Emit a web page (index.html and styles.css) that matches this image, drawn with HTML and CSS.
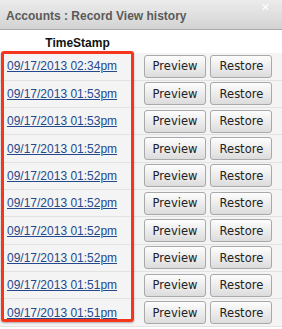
FILE: index.html
```html
<html>
<head>
<link rel="stylesheet" href="styles.css">
</head>
<body>
<div class="dialog">
  <div class="titlebar">
    <span class="title">Accounts : Record View history</span>
    <span class="close">&#x2715;</span>
  </div>
  <table class="history">
    <tr>
      <th class="stamp">TimeStamp</th>
      <th></th>
      <th></th>
    </tr>
    <tr><td class="stamp"><a href="#">09/17/2013 02:34pm</a></td><td><button>Preview</button></td><td><button>Restore</button></td></tr>
    <tr><td class="stamp"><a href="#">09/17/2013 01:53pm</a></td><td><button>Preview</button></td><td><button>Restore</button></td></tr>
    <tr><td class="stamp"><a href="#">09/17/2013 01:53pm</a></td><td><button>Preview</button></td><td><button>Restore</button></td></tr>
    <tr><td class="stamp"><a href="#">09/17/2013 01:52pm</a></td><td><button>Preview</button></td><td><button>Restore</button></td></tr>
    <tr><td class="stamp"><a href="#">09/17/2013 01:52pm</a></td><td><button>Preview</button></td><td><button>Restore</button></td></tr>
    <tr><td class="stamp"><a href="#">09/17/2013 01:52pm</a></td><td><button>Preview</button></td><td><button>Restore</button></td></tr>
    <tr><td class="stamp"><a href="#">09/17/2013 01:52pm</a></td><td><button>Preview</button></td><td><button>Restore</button></td></tr>
    <tr><td class="stamp"><a href="#">09/17/2013 01:52pm</a></td><td><button>Preview</button></td><td><button>Restore</button></td></tr>
    <tr><td class="stamp"><a href="#">09/17/2013 01:51pm</a></td><td><button>Preview</button></td><td><button>Restore</button></td></tr>
    <tr><td class="stamp"><a href="#">09/17/2013 01:51pm</a></td><td><button>Preview</button></td><td><button>Restore</button></td></tr>
  </table>
  <div class="highlight"></div>
</div>
</body>
</html>
```
FILE: styles.css
```css
body {
    margin: 0;
    background: #ffffff;
    font-family: "Liberation Sans", Arial, sans-serif;
}
.dialog {
    position: relative;
    width: 282px;
    height: 329px;
    overflow: hidden;
}
.titlebar {
    display: flex;
    justify-content: space-between;
    align-items: flex-start;
    height: 29px;
    border-bottom: 1px solid #a9a9a9;
    background: linear-gradient(#ececec, #d3d3d3);
    padding: 0 0 0 6px;
}
.title {
    margin-top: 9px;
    font-size: 12px;
    font-weight: bold;
    color: #5a5a5a;
}
.close {
    margin: 1px 12px 0 0;
    font-family: "DejaVu Sans", sans-serif;
    font-size: 11px;
    font-weight: bold;
    color: #ffffff;
}
.history {
    width: 100%;
    border-collapse: collapse;
    margin-top: 4px;
}
.history th {
    height: 19px;
    padding: 0 0 3px 0;
    font-size: 12px;
    font-weight: bold;
    color: #111111;
    vertical-align: bottom;
}
.history th.stamp {
    padding-left: 14px;
}
.history td {
    height: 27.33px;
    padding: 0 0 0 3px;
    background: #f4f4f4;
    border-bottom: 1px solid #e2e2e2;
}
.history td:last-child {
    padding-right: 8px;
}
.history td.stamp {
    width: 134px;
    padding-left: 7px;
}
.history a {
    font-size: 12px;
    color: #24498c;
}
.history button {
    display: block;
    width: 62px;
    height: 23px;
    padding: 0;
    border: 1px solid #a9a9a9;
    border-radius: 3px;
    background: linear-gradient(#fdfdfd, #dcdcdc);
    font-family: "DejaVu Sans", sans-serif;
    font-size: 11.5px;
    color: #222222;
}
.highlight {
    position: absolute;
    left: 1px;
    top: 51px;
    width: 127px;
    height: 265px;
    border: 3px solid #f5361c;
    border-radius: 3px;
    box-shadow: 0 1px 2px rgba(0, 0, 0, 0.3);
}
```
